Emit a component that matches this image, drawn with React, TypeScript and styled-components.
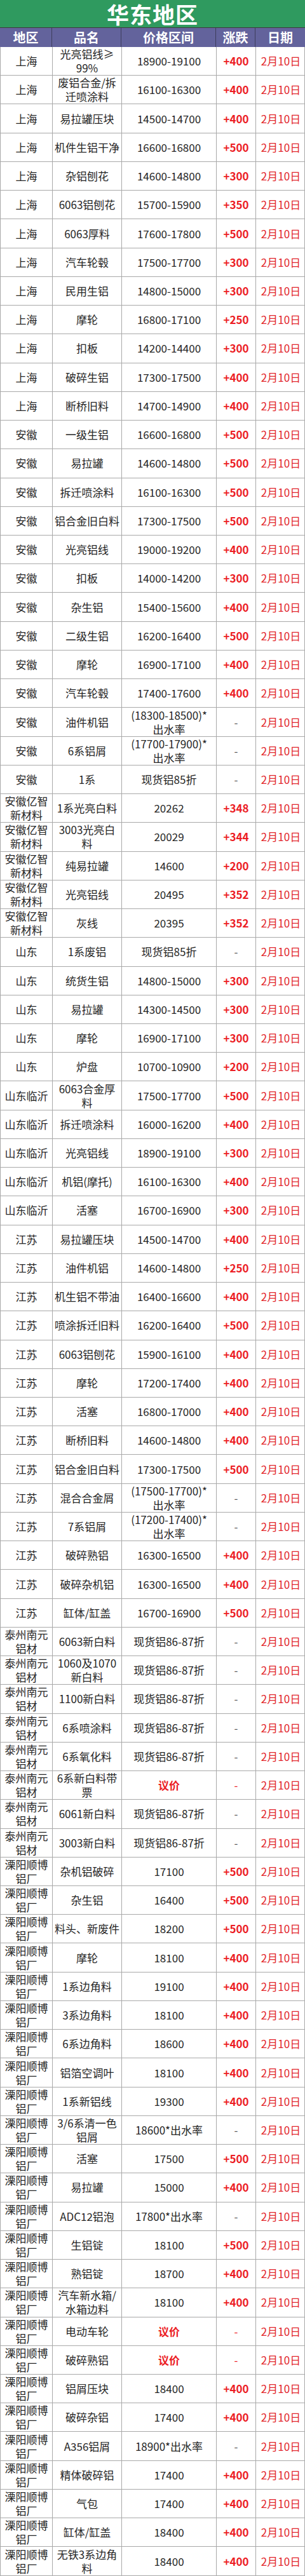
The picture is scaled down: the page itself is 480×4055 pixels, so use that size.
import React from "react";
import styled, { createGlobalStyle } from "styled-components";

const Global = createGlobalStyle`
  html, body { margin: 0; padding: 0; background: #ffffff; }
  body { font-family: "Noto Sans CJK SC", "Microsoft YaHei", "Noto Sans", sans-serif; }
`;

const COLS = "82px 109px 149px 62px 78px";

const Table = styled.div`
  width: 480px;
  display: flex;
  flex-direction: column;
  background: #fff;
`;

const Banner = styled.div`
  height: 44px;
  background: #2f9a5f;
  color: #ffffff;
  font-weight: 700;
  font-size: 35px;
  line-height: 43px;
  text-align: center;
  letter-spacing: 1px;
  border-bottom: 1px solid #3b3b3b;
  box-sizing: border-box;
`;

const HeadRow = styled.div`
  display: grid;
  grid-template-columns: ${COLS};
  height: 30px;
  background: #63639c;
  box-sizing: border-box;
`;

const HeadCell = styled.div`
  display: flex;
  align-items: center;
  justify-content: center;
  color: #ffffff;
  font-weight: 700;
  font-size: 20px;
  line-height: 24px;
  border-right: 1px solid #3d3d5c;
  box-sizing: border-box;
  &:last-child { border-right: none; }
`;

const Row = styled.div`
  display: grid;
  grid-template-columns: ${COLS};
  height: 45.24px;
  box-sizing: border-box;
  border-bottom: 1px solid #a9a9a9;
  border-left: 1px solid #a9a9a9;
  border-right: 1px solid #a9a9a9;
`;

type Tone = "plain" | "up" | "date" | "dash" | "deal" | "dealDash";

const Cell = styled.div<{ $tone?: Tone }>`
  display: flex;
  align-items: center;
  justify-content: center;
  text-align: center;
  white-space: pre-line;
  font-size: 17px;
  line-height: 22px;
  box-sizing: border-box;
  border-right: 1px solid #a9a9a9;
  &:last-child { border-right: none; }
  color: ${(p) =>
    p.$tone === "up" || p.$tone === "deal" || p.$tone === "dealDash"
      ? "#ec1c24"
      : p.$tone === "date"
      ? "#e2262c"
      : p.$tone === "dash"
      ? "#555555"
      : "#262626"};
  font-weight: ${(p) => (p.$tone === "up" || p.$tone === "deal" ? 700 : 400)};
`;

const SH = "上海";
const AH = "安徽";
const YZ = "安徽亿智\n新材料";
const SD = "山东";
const LY = "山东临沂";
const JS = "江苏";
const TZ = "泰州南元\n铝材";
const SB = "溧阳顺博\n铝厂";
const NY = "(";

const data: [string, string, string, string][] = [
  [SH, "光亮铝线≥\n99%", "18900-19100", "+400"],
  [SH, "废铝合金/拆\n迁喷涂料", "16100-16300", "+400"],
  [SH, "易拉罐压块", "14500-14700", "+400"],
  [SH, "机件生铝干净", "16600-16800", "+500"],
  [SH, "杂铝刨花", "14600-14800", "+300"],
  [SH, "6063铝刨花", "15700-15900", "+350"],
  [SH, "6063厚料", "17600-17800", "+500"],
  [SH, "汽车轮毂", "17500-17700", "+300"],
  [SH, "民用生铝", "14800-15000", "+300"],
  [SH, "摩轮", "16800-17100", "+250"],
  [SH, "扣板", "14200-14400", "+300"],
  [SH, "破碎生铝", "17300-17500", "+400"],
  [SH, "断桥旧料", "14700-14900", "+400"],
  [AH, "一级生铝", "16600-16800", "+500"],
  [AH, "易拉罐", "14600-14800", "+500"],
  [AH, "拆迁喷涂料", "16100-16300", "+500"],
  [AH, "铝合金旧白料", "17300-17500", "+500"],
  [AH, "光亮铝线", "19000-19200", "+400"],
  [AH, "扣板", "14000-14200", "+300"],
  [AH, "杂生铝", "15400-15600", "+400"],
  [AH, "二级生铝", "16200-16400", "+500"],
  [AH, "摩轮", "16900-17100", "+400"],
  [AH, "汽车轮毂", "17400-17600", "+400"],
  [AH, "油件机铝", NY + "18300-18500)*\n出水率", "-"],
  [AH, "6系铝屑", NY + "17700-17900)*\n出水率", "-"],
  [AH, "1系", "现货铝85折", "-"],
  [YZ, "1系光亮白料", "20262", "+348"],
  [YZ, "3003光亮白\n料", "20029", "+344"],
  [YZ, "纯易拉罐", "14600", "+200"],
  [YZ, "光亮铝线", "20495", "+352"],
  [YZ, "灰线", "20395", "+352"],
  [SD, "1系废铝", "现货铝85折", "-"],
  [SD, "统货生铝", "14800-15000", "+300"],
  [SD, "易拉罐", "14300-14500", "+300"],
  [SD, "摩轮", "16900-17100", "+300"],
  [SD, "炉盘", "10700-10900", "+200"],
  [LY, "6063合金厚\n料", "17500-17700", "+500"],
  [LY, "拆迁喷涂料", "16000-16200", "+400"],
  [LY, "光亮铝线", "18900-19100", "+300"],
  [LY, "机铝(摩托)", "16100-16300", "+400"],
  [LY, "活塞", "16700-16900", "+300"],
  [JS, "易拉罐压块", "14500-14700", "+400"],
  [JS, "油件机铝", "14600-14800", "+250"],
  [JS, "机生铝不带油", "16400-16600", "+400"],
  [JS, "喷涂拆迁旧料", "16200-16400", "+500"],
  [JS, "6063铝刨花", "15900-16100", "+400"],
  [JS, "摩轮", "17200-17400", "+400"],
  [JS, "活塞", "16800-17000", "+400"],
  [JS, "断桥旧料", "14600-14800", "+400"],
  [JS, "铝合金旧白料", "17300-17500", "+500"],
  [JS, "混合合金屑", NY + "17500-17700)*\n出水率", "-"],
  [JS, "7系铝屑", NY + "17200-17400)*\n出水率", "-"],
  [JS, "破碎熟铝", "16300-16500", "+400"],
  [JS, "破碎杂机铝", "16300-16500", "+400"],
  [JS, "缸体/缸盖", "16700-16900", "+500"],
  [TZ, "6063新白料", "现货铝86-87折", "-"],
  [TZ, "1060及1070\n新白料", "现货铝86-87折", "-"],
  [TZ, "1100新白料", "现货铝86-87折", "-"],
  [TZ, "6系喷涂料", "现货铝86-87折", "-"],
  [TZ, "6系氧化料", "现货铝86-87折", "-"],
  [TZ, "6系新白料带\n票", "议价", "-"],
  [TZ, "6061新白料", "现货铝86-87折", "-"],
  [TZ, "3003新白料", "现货铝86-87折", "-"],
  [SB, "杂机铝破碎", "17100", "+500"],
  [SB, "杂生铝", "16400", "+500"],
  [SB, "料头、新废件", "18200", "+500"],
  [SB, "摩轮", "18100", "+400"],
  [SB, "1系边角料", "19100", "+400"],
  [SB, "3系边角料", "18100", "+400"],
  [SB, "6系边角料", "18600", "+400"],
  [SB, "铝箔空调叶", "18100", "+400"],
  [SB, "1系新铝线", "19300", "+400"],
  [SB, "3/6系清一色\n铝屑", "18600*出水率", "-"],
  [SB, "活塞", "17500", "+500"],
  [SB, "易拉罐", "15000", "+400"],
  [SB, "ADC12铝泡", "17800*出水率", "-"],
  [SB, "生铝锭", "18100", "+500"],
  [SB, "熟铝锭", "18700", "+400"],
  [SB, "汽车新水箱/\n水箱边料", "18100", "+400"],
  [SB, "电动车轮", "议价", "-"],
  [SB, "破碎熟铝", "议价", "-"],
  [SB, "铝屑压块", "18400", "+400"],
  [SB, "破碎杂铝", "17400", "+400"],
  [SB, "A356铝屑", "18900*出水率", "-"],
  [SB, "精体破碎铝", "17400", "+400"],
  [SB, "气包", "17400", "+400"],
  [SB, "缸体/缸盖", "18400", "+400"],
  [SB, "无铁3系边角\n料", "18400", "+400"],
];

export default function App() {
  return (
    <>
      <Global />
      <Table>
        <Banner>华东地区</Banner>
        <HeadRow>
          <HeadCell>地区</HeadCell>
          <HeadCell>品名</HeadCell>
          <HeadCell>价格区间</HeadCell>
          <HeadCell>涨跌</HeadCell>
          <HeadCell>日期</HeadCell>
        </HeadRow>
        {data.map(([region, name, price, change], i) => {
          const deal = price === "议价";
          const dash = change === "-";
          return (
            <Row key={i}>
              <Cell>{region}</Cell>
              <Cell>{name}</Cell>
              <Cell $tone={deal ? "deal" : "plain"}>{price}</Cell>
              <Cell $tone={deal ? "dealDash" : dash ? "dash" : "up"}>{change}</Cell>
              <Cell $tone="date">2月10日</Cell>
            </Row>
          );
        })}
      </Table>
    </>
  );
}
